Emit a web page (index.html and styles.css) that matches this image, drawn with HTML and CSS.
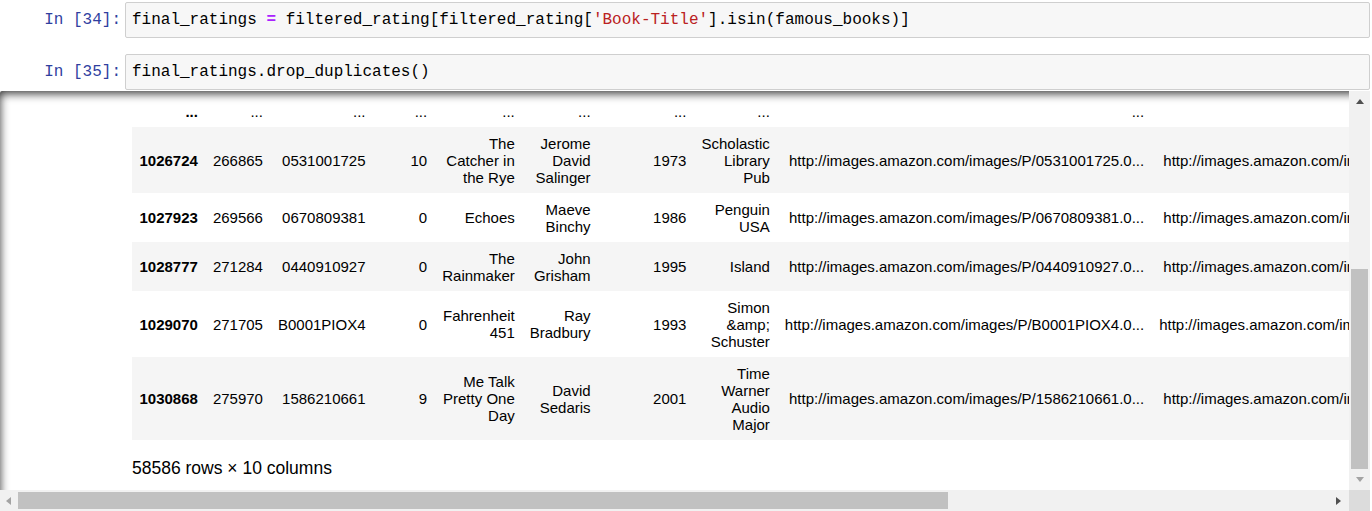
FILE: index.html
```html
<!DOCTYPE html>
<html>
<head>
<meta charset="utf-8">
<title>Notebook</title>
<link rel="stylesheet" href="styles.css">
</head>
<body>
<div class="notebook">
  <div class="cell">
    <div class="prompt">In&nbsp;[34]:</div>
    <div class="input">final_ratings <span class="op">=</span> filtered_rating[filtered_rating[<span class="str">'Book-Title'</span>].isin(famous_books)]</div>
  </div>
  <div class="cell cell-last">
    <div class="prompt">In&nbsp;[35]:</div>
    <div class="input">final_ratings.drop_duplicates()</div>
  </div>
  <div class="output-scroll">
    <div class="viewport">
      <div class="out-prompt"></div>
      <div class="output-sub">
        <table class="dataframe">
          <thead>
            <tr>
              <th></th><th>User-ID</th><th>ISBN</th><th>Book-Rating</th><th>Book-Title</th><th>Book-Author</th><th>Year-Of-Publication</th><th>Publisher</th><th>Image-URL-S</th><th>Image-URL-M</th><th>Image-URL-L</th>
            </tr>
          </thead>
          <tbody>
            <tr>
              <th>...</th><td>...</td><td>...</td><td>...</td><td>...</td><td>...</td><td>...</td><td>...</td><td>...</td><td>...</td><td>...</td>
            </tr>
            <tr class="odd">
              <th>1026724</th><td>266865</td><td>0531001725</td><td>10</td><td>The Catcher in the Rye</td><td>Jerome David Salinger</td><td>1973</td><td>Scholastic Library Pub</td><td class="url">http://images.amazon.com/images/P/0531001725.0...</td><td class="url">http://images.amazon.com/images/P/0531001725.0...</td><td class="url">http://images.amazon.com/images/P/0531001725.0...</td>
            </tr>
            <tr>
              <th>1027923</th><td>269566</td><td>0670809381</td><td>0</td><td>Echoes</td><td>Maeve Binchy</td><td>1986</td><td>Penguin USA</td><td class="url">http://images.amazon.com/images/P/0670809381.0...</td><td class="url">http://images.amazon.com/images/P/0670809381.0...</td><td class="url">http://images.amazon.com/images/P/0670809381.0...</td>
            </tr>
            <tr class="odd">
              <th>1028777</th><td>271284</td><td>0440910927</td><td>0</td><td>The Rainmaker</td><td>John Grisham</td><td>1995</td><td>Island</td><td class="url">http://images.amazon.com/images/P/0440910927.0...</td><td class="url">http://images.amazon.com/images/P/0440910927.0...</td><td class="url">http://images.amazon.com/images/P/0440910927.0...</td>
            </tr>
            <tr>
              <th>1029070</th><td>271705</td><td>B0001PIOX4</td><td>0</td><td>Fahrenheit 451</td><td>Ray Bradbury</td><td>1993</td><td>Simon &amp;amp; Schuster</td><td class="url">http://images.amazon.com/images/P/B0001PIOX4.0...</td><td class="url">http://images.amazon.com/images/P/B0001PIOX4.0...</td><td class="url">http://images.amazon.com/images/P/B0001PIOX4.0...</td>
            </tr>
            <tr class="odd">
              <th>1030868</th><td>275970</td><td>1586210661</td><td>9</td><td>Me Talk Pretty One Day</td><td>David Sedaris</td><td>2001</td><td>Time Warner Audio Major</td><td class="url">http://images.amazon.com/images/P/1586210661.0...</td><td class="url">http://images.amazon.com/images/P/1586210661.0...</td><td class="url">http://images.amazon.com/images/P/1586210661.0...</td>
            </tr>
          </tbody>
        </table>
        <p class="shape">58586 rows × 10 columns</p>
      </div>
    </div>
    <div class="vscroll">
      <div class="vbtn"><span class="arrow-up"></span></div>
      <div class="vtrack"><div class="vthumb"></div></div>
      <div class="vbtn"><span class="arrow-down"></span></div>
    </div>
    <div class="hscroll">
      <div class="hbtn hbtn-l"><span class="arrow-left"></span></div>
      <div class="htrack"><div class="hthumb"></div></div>
      <div class="hbtn hbtn-r"><span class="arrow-right"></span></div>
    </div>
    <div class="corner"></div>
  </div>
</div>
</body>
</html>
```

FILE: styles.css
```css
html, body {
  margin: 0;
  padding: 0;
  background: #ffffff;
}

body {
  width: 1372px;
  height: 511px;
  overflow: hidden;
}

.notebook {
  width: 1370px;
  padding-top: 2px;
}

.cell {
  display: flex;
  align-items: flex-start;
  margin-bottom: 16px;
}

.cell-last {
  margin-bottom: 1px;
}

.prompt {
  flex: none;
  width: 121px;
  margin-right: 4px;
  padding-top: 7px;
  text-align: right;
  font-family: "Liberation Mono", "DejaVu Sans Mono", monospace;
  font-size: 16px;
  line-height: 22px;
  color: #303f9f;
  white-space: nowrap;
}

.input {
  flex: 1;
  min-width: 0;
  background: #f7f7f7;
  border: 1px solid #cfcfcf;
  border-radius: 2px;
  padding: 6px;
  font-family: "Liberation Mono", "DejaVu Sans Mono", monospace;
  font-size: 16px;
  line-height: 22px;
  color: #000000;
  white-space: pre;
  overflow: hidden;
}

.op {
  color: #aa22ff;
  font-weight: bold;
}

.str {
  color: #ba2121;
}

/* output area with scrollbars */
.output-scroll {
  display: grid;
  grid-template-columns: 1349px 21px;
  grid-template-rows: 399px 21px;
  box-shadow: inset 0 2.5px 10px rgba(0, 0, 0, 0.8);
  border-radius: 2px;
}

.viewport {
  overflow: hidden;
  display: flex;
  align-items: flex-start;
  padding-top: 4px;
  box-sizing: border-box;
  min-width: 0;
}

.out-prompt {
  flex: none;
  width: 125px;
}

.output-sub {
  flex: 1 1 0;
  min-width: 0;
  padding-left: 7px;
  font-family: "Liberation Sans", Arial, sans-serif;
  color: #000000;
}

.dataframe {
  border-collapse: collapse;
  border-spacing: 0;
  border: none;
  font-size: 15px;
  line-height: normal;
}

.dataframe thead tr {
  visibility: collapse;
}

.dataframe th,
.dataframe td {
  padding: 7.5px;
  text-align: right;
  vertical-align: middle;
  border: none;
}

.dataframe th {
  font-weight: bold;
}

.dataframe td {
  font-weight: normal;
}

.dataframe tr.odd {
  background: #f5f5f5;
}

.dataframe td.url {
  white-space: nowrap;
}

.shape {
  margin: 17.5px 0 0 0;
  font-size: 17.5px;
  line-height: normal;
}

/* scrollbars */
.vscroll {
  display: flex;
  flex-direction: column;
  background: #f1f1f1;
}

.vbtn {
  flex: none;
  height: 21px;
  display: flex;
  align-items: center;
  justify-content: center;
}

.vtrack {
  flex: 1;
  display: flex;
  flex-direction: column;
  justify-content: flex-end;
  padding: 0 2px;
}

.vthumb {
  height: 200px;
  background: #c1c1c1;
}

.hscroll {
  display: flex;
  background: #f1f1f1;
}

.hbtn {
  flex: none;
  display: flex;
  align-items: center;
  justify-content: center;
}

.hbtn-l {
  width: 17px;
}

.hbtn-r {
  width: 21px;
}

.htrack {
  flex: 1;
  display: flex;
  padding: 2px 0 2px 1px;
}

.hthumb {
  width: 930px;
  background: #c1c1c1;
}

.corner {
  background: #dcdcdc;
}

.arrow-up {
  width: 0;
  height: 0;
  border-left: 4.5px solid transparent;
  border-right: 4.5px solid transparent;
  border-bottom: 5px solid #505050;
}

.arrow-down {
  width: 0;
  height: 0;
  border-left: 4.5px solid transparent;
  border-right: 4.5px solid transparent;
  border-top: 5px solid #a3a3a3;
}

.arrow-left {
  width: 0;
  height: 0;
  border-top: 4.5px solid transparent;
  border-bottom: 4.5px solid transparent;
  border-right: 5px solid #a3a3a3;
}

.arrow-right {
  width: 0;
  height: 0;
  border-top: 4.5px solid transparent;
  border-bottom: 4.5px solid transparent;
  border-left: 5px solid #505050;
}
```
